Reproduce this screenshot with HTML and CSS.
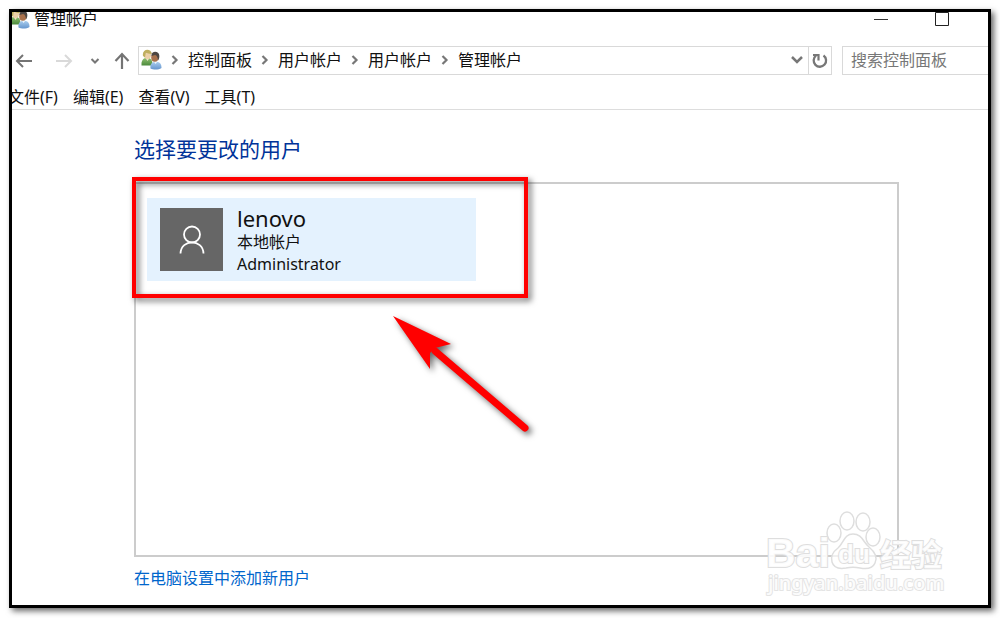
FILE: index.html
```html
<!DOCTYPE html>
<html lang="zh-CN">
<head>
<meta charset="utf-8">
<meta name="viewport" content="width=device-width, initial-scale=1">
<title>管理帐户</title>
<link rel="stylesheet" href="styles.css">
</head>
<body>
<svg class="defs" aria-hidden="true">
  <defs>
    <linearGradient id="green" x1="0" y1="0" x2="0" y2="1"><stop offset="0" stop-color="#8fbf70"/><stop offset="1" stop-color="#4c8a3c"/></linearGradient>
    <linearGradient id="blue" x1="0" y1="0" x2="0" y2="1"><stop offset="0" stop-color="#a9cdee"/><stop offset="1" stop-color="#6595cd"/></linearGradient>
    <symbol id="users" viewBox="0 0 21 21">
      <path d="M.5 16.500c-.5-4 1-6.500 3.500-7.500h4c2.500.8 3.500 3 3.500 7.500z" fill="url(#green)"/>
      <path d="M4.500 9l2 3 2-3z" fill="#f4e3c8"/>
      <ellipse cx="6.500" cy="5.800" rx="3.500" ry="4.200" fill="#ecd0a8"/>
      <path d="M2 7C.5-.5 10-1.500 11 5 8 5 6 4 4.800 3.800L4 8.500z" fill="#bfae5e"/>
      <path d="M9.500 19.500c-.5-4 1-6 3.500-6.500h4c2.500.7 3.500 2.500 3.500 6-3 2-8 2-11 .5z" fill="url(#blue)"/>
      <path d="M12.500 12l2 3 2.500-3z" fill="#eef5fb"/>
      <ellipse cx="13.800" cy="8.500" rx="3.600" ry="4.300" fill="#a8714c"/>
      <path d="M10.500 7C10 1.500 18 1.500 18.300 6.500c.2 2-.3 3.800-1.300 5C16.800 8 16 6.500 14 6z" fill="#4c4642"/>
    </symbol>
    <symbol id="chevron" viewBox="0 0 8 10"><path d="M1.500 1l4 4-4 4" fill="none" stroke="#777" stroke-width="2.200"/></symbol>
  </defs>
</svg>
<div class="window">
  <header class="titlebar">
    <svg class="users-icon" aria-hidden="true"><use href="#users"/></svg>
    <h1 class="caption">管理帐户</h1>
    <button class="caption-button" type="button" aria-label="最小化"><svg width="14" height="14" viewBox="0 0 14 14"><path d="M0 7.500h14" stroke="#333"/></svg></button>
    <button class="caption-button" type="button" aria-label="最大化"><svg width="14" height="14" viewBox="0 0 14 14"><path d="M.5.5h13v13H.5z" fill="none" stroke="#222"/></svg></button>
  </header>

  <nav class="toolbar">
    <div class="history">
      <button class="icon-button" type="button" aria-label="后退"><svg width="18" height="16" viewBox="0 0 18 16"><path d="M17 8H2M8 2L2 8l6 6" fill="none" stroke="#747474" stroke-width="2"/></svg></button>
      <button class="icon-button forward" type="button" aria-label="前进"><svg width="18" height="16" viewBox="0 0 18 16"><path d="M1 8h15M10 2l6 6-6 6" fill="none" stroke="#d9d9d9" stroke-width="2"/></svg></button>
      <button class="icon-button recent" type="button" aria-label="最近位置"><svg width="10" height="8" viewBox="0 0 10 8"><path d="M1.500 2L5 5.500 8.500 2" fill="none" stroke="#777" stroke-width="2"/></svg></button>
      <button class="icon-button up" type="button" aria-label="上移"><svg width="16" height="18" viewBox="0 0 16 18"><path d="M8 17V2M1.500 9L8 2l6.500 7" fill="none" stroke="#747474" stroke-width="2.200"/></svg></button>
    </div>
    <div class="address">
      <svg class="users-icon" aria-hidden="true"><use href="#users"/></svg>
      <svg class="chevron" aria-hidden="true"><use href="#chevron"/></svg>
      <a class="crumb" href="#">控制面板</a>
      <svg class="chevron" aria-hidden="true"><use href="#chevron"/></svg>
      <a class="crumb" href="#">用户帐户</a>
      <svg class="chevron" aria-hidden="true"><use href="#chevron"/></svg>
      <a class="crumb" href="#">用户帐户</a>
      <svg class="chevron" aria-hidden="true"><use href="#chevron"/></svg>
      <a class="crumb" href="#">管理帐户</a>
      <button class="icon-button address-drop" type="button" aria-label="以前的位置"><svg width="14" height="10" viewBox="0 0 14 10"><path d="M2 2l5 5 5-5" fill="none" stroke="#777" stroke-width="2.500"/></svg></button>
      <button class="icon-button refresh" type="button" aria-label="刷新"><svg width="16" height="16" viewBox="0 0 16 16"><path d="M11.500 2.500a6.200 6.200 0 1 1-7.500.2" fill="none" stroke="#777" stroke-width="2.300"/><path d="M1 2h5.500v5.500" fill="none" stroke="#777" stroke-width="2.200"/></svg></button>
    </div>
    <input class="search" type="text" placeholder="搜索控制面板" aria-label="搜索控制面板">
  </nav>

  <div class="menubar">
    <button class="menu" type="button">文件(F)</button>
    <button class="menu" type="button">编辑(E)</button>
    <button class="menu" type="button">查看(V)</button>
    <button class="menu" type="button">工具(T)</button>
  </div>

  <main class="content">
    <h2 class="heading">选择要更改的用户</h2>
    <section class="accounts">
      <button class="account" type="button">
        <span class="avatar"><svg width="26" height="30" viewBox="0 0 26 30"><g fill="none" stroke="#fff" stroke-width="1.800"><circle cx="13" cy="9.500" r="8"/><path d="M1.500 28.500C2 13.700 24 13.700 24.500 28.500"/></g></svg></span>
        <span class="details">
          <span class="name">lenovo</span>
          <span class="info">本地帐户</span>
          <span class="info">Administrator</span>
        </span>
      </button>
      <div class="marker"></div>
      <svg class="arrow" width="150" height="130" viewBox="0 0 150 130" aria-hidden="true">
        <path d="M43 38L133 115" stroke="#f00" stroke-width="7" stroke-linecap="round"/>
        <path d="M1 3L59 31 43 35 38 40 38 56z" fill="#f00"/>
      </svg>
    </section>
    <a class="add-link" href="#">在电脑设置中添加新用户</a>
  </main>

  <div class="watermark">
    <svg width="184" height="90" viewBox="0 0 184 90" role="img" aria-label="Baidu 经验 jingyan.baidu.com">
      <g class="mark">
        <ellipse cx="69" cy="25" rx="7" ry="9"/><ellipse cx="82" cy="13" rx="7" ry="9"/><ellipse cx="98" cy="14" rx="7" ry="9"/><ellipse cx="108" cy="29" rx="7" ry="9"/>
        <path d="M88 26c9 0 10 8 16 13s9 10 6 16c-3 7-10 6-15 5-5-1-9-1-14 0-6 1-12 1-14-6s2-11 6-14c6-5 6-14 15-14z"/>
        <text class="brand" x="1" y="59">Bai</text>
        <text class="du" x="73" y="55">du</text>
        <text class="jingyan" x="115" y="58">经验</text>
        <text class="domain" x="3" y="82">jingyan.baidu.com</text>
      </g>
    </svg>
  </div>
</div>
</body>
</html>
```
FILE: styles.css
```css
* { box-sizing: border-box; }

body {
  margin: 0;
  padding: 9px 9px 10px 9px;
  min-height: 100vh;
  display: flex;
  background: #fff;
  color: #111;
  font: 400 16px/22px "Noto Sans", "Noto Sans CJK SC", sans-serif;
}

button, input {
  margin: 0;
  padding: 0;
  border: 0;
  background: none;
  color: inherit;
  font: inherit;
}

svg { flex: none; }

.defs { position: absolute; width: 0; height: 0; }

.window {
  position: relative;
  flex: 1;
  min-width: 0;
  display: flex;
  flex-direction: column;
  border: 3px solid #000;
  background: #fff;
  box-shadow: 3px 3px 6px rgba(0, 0, 0, 0.6);
}

.titlebar {
  display: flex;
  align-items: center;
  height: 13px;
  padding-right: 39px;
}

.titlebar .users-icon {
  margin-left: -3px;
  clip-path: inset(4px 0 0 3px);
}

.users-icon { width: 21px; height: 21px; }

.caption {
  flex: 1;
  margin: 0 0 0 4px;
  font-size: 16px;
  font-weight: 400;
  line-height: 22px;
}

.caption-button {
  display: flex;
  margin-left: 47px;
}

.toolbar {
  display: flex;
  height: 29px;
  margin-top: 21px;
}

.history {
  display: flex;
  align-items: center;
  width: 126px;
  padding-left: 3px;
}

.icon-button {
  display: flex;
  align-items: center;
  justify-content: center;
}

.forward { margin-left: 22px; }
.recent { margin-left: 17px; }
.up { margin-left: 14px; }

.address {
  flex: 1;
  display: flex;
  align-items: center;
  padding-left: 2px;
  padding-bottom: 2px;
  border: 1px solid #d9d9d9;
}

.chevron { width: 8px; height: 10px; margin: 0 9px; }
.crumb { color: inherit; text-decoration: none; }
.address-drop { margin-left: auto; width: 22px; align-self: stretch; }

.refresh {
  width: 23px;
  margin-bottom: -2px;
  align-self: stretch;
  border-left: 1px solid #d9d9d9;
}

.search {
  width: 146px;
  margin-left: 10px;
  padding: 0 0 2px 8px;
  border: 1px solid #d9d9d9;
  border-right: 0;
}

.search::placeholder { color: #777; opacity: 1; }

.menubar {
  display: flex;
  gap: 15px;
  height: 35px;
  padding-bottom: 1px;
  align-items: flex-end;
  border-bottom: 1px solid #ddd;
}

.menu { white-space: nowrap; line-height: 22px; }
.menu:first-child { margin-left: -4px; clip-path: inset(0 0 0 4px); }

.content {
  flex: 1;
  display: flex;
  flex-direction: column;
  align-items: flex-start;
  padding: 25px 89px 16px 122px;
}

.heading {
  margin: 0;
  color: #003399;
  font-size: 21px;
  font-weight: 400;
  line-height: 28px;
}

.accounts {
  position: relative;
  flex: 1;
  align-self: stretch;
  margin-top: 19px;
  padding: 14px 11px;
  border: 2px solid #ccc;
}

.account {
  display: flex;
  align-items: center;
  gap: 14px;
  width: 329px;
  height: 83px;
  padding-left: 13px;
  background: #e4f2fe;
  text-align: left;
}

.avatar {
  display: flex;
  align-items: center;
  justify-content: center;
  width: 63px;
  height: 63px;
  background: #666;
}

.details { display: flex; flex-direction: column; }
.name { font-size: 22px; line-height: 26px; }
.info { font-size: 16px; line-height: 22px; }

.marker {
  position: absolute;
  top: -7px;
  left: -4px;
  width: 396px;
  height: 121px;
  border: 4px solid #f00;
  filter: drop-shadow(3px 3px 3px rgba(0, 0, 0, 0.6));
}

.arrow {
  position: absolute;
  top: 129px;
  left: 256px;
  filter: drop-shadow(3px 3px 3px rgba(0, 0, 0, 0.6));
}

.add-link {
  margin-top: 10px;
  color: #0066cc;
  text-decoration: none;
}

.watermark {
  position: absolute;
  right: 39px;
  bottom: 7px;
  display: flex;
}

.mark {
  fill: #fff;
  fill-opacity: 0.7;
  stroke: #dedede;
  stroke-width: 1.5;
  font-family: "Liberation Sans", "Noto Sans CJK SC", sans-serif;
  font-weight: 700;
}

.mark text { paint-order: stroke; stroke-width: 2px; fill-opacity: 0.9; }
.brand { font-size: 41px; }
.du { font-size: 26px; }
.jingyan { font-size: 31px; }
.mark .domain { font-family: "Noto Sans", sans-serif; font-size: 20px; font-weight: 500; stroke: #e4e4e4; }
```
